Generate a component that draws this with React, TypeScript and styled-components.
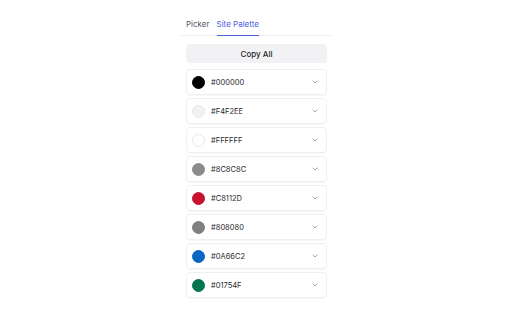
import React from 'react'
import styled, { createGlobalStyle } from 'styled-components'

const colors = [
    '#000000',
    '#F4F2EE',
    '#FFFFFF',
    '#8C8C8C',
    '#C8112D',
    '#808080',
    '#0A66C2',
    '#01754F'
]

export default function App() {
    return (
        <Page>
            <GlobalStyle />
            <Panel>
                <TabBar>
                    <Tab>Picker</Tab>
                    <Tab $active>Site Palette</Tab>
                </TabBar>
                <Content>
                    <CopyButton>Copy All</CopyButton>
                    <List>
                        {colors.map((c) => (
                            <Card key={c}>
                                <Swatch $color={c} />
                                <Hex>{c}</Hex>
                                <Chevron viewBox="0 0 8 8">
                                    <path
                                        d="M2 3 L4 5 L6 3"
                                        fill="none"
                                        stroke="#9a9aa2"
                                        strokeWidth="0.9"
                                        strokeLinecap="round"
                                        strokeLinejoin="round"
                                    />
                                </Chevron>
                            </Card>
                        ))}
                    </List>
                </Content>
            </Panel>
        </Page>
    )
}

const GlobalStyle = createGlobalStyle`
    body {
        margin: 0;
        background: #ffffff;
        font-family: Inter, 'Liberation Sans', sans-serif;
    }
`
const Page = styled.div`
    width: 512px;
    height: 320px;
    overflow: hidden;
    display: flex;
    justify-content: center;
`
const Panel = styled.div`
    width: 152px;
    padding-top: 16px;
    display: flex;
    flex-direction: column;
`
const TabBar = styled.div`
    display: flex;
    gap: 7px;
    padding: 0 6px;
    border-bottom: 1px solid #f0f0f3;
`
const Tab = styled.div<{ $active?: boolean }>`
    font-size: 8px;
    line-height: 10px;
    padding: 3px 0 6px;
    color: ${(p) => (p.$active ? '#4a5ee6' : '#55555c')};
    border-bottom: 1px solid
        ${(p) => (p.$active ? '#4a5ee6' : 'transparent')};
    margin-bottom: -1px;
`
const Content = styled.div`
    padding: 8px 5px 0 6px;
    display: flex;
    flex-direction: column;
`
const CopyButton = styled.div`
    height: 19px;
    border-radius: 4px;
    background: #f2f2f5;
    color: #26262a;
    font-size: 8px;
    font-weight: 500;
    display: flex;
    align-items: center;
    justify-content: center;
`
const List = styled.div`
    margin-top: 6px;
    display: flex;
    flex-direction: column;
    gap: 3px;
`
const Card = styled.div`
    height: 26px;
    box-sizing: border-box;
    border: 1px solid #f0f0f3;
    border-radius: 4px;
    box-shadow: 0 1px 1px rgba(0, 0, 0, 0.03);
    display: flex;
    align-items: center;
    padding: 0 7px 0 5px;
`
const Swatch = styled.div<{ $color: string }>`
    width: 13px;
    height: 13px;
    border-radius: 50%;
    background: ${(p) => p.$color};
    border: 1px solid
        ${(p) => (p.$color === '#FFFFFF' || p.$color === '#F4F2EE' ? '#e8e8ec' : p.$color)};
    box-sizing: border-box;
    flex-shrink: 0;
`
const Hex = styled.div`
    margin-left: 6px;
    flex: 1;
    font-size: 7.5px;
    color: #2a2a2e;
`
const Chevron = styled.svg`
    width: 8px;
    height: 8px;
`
